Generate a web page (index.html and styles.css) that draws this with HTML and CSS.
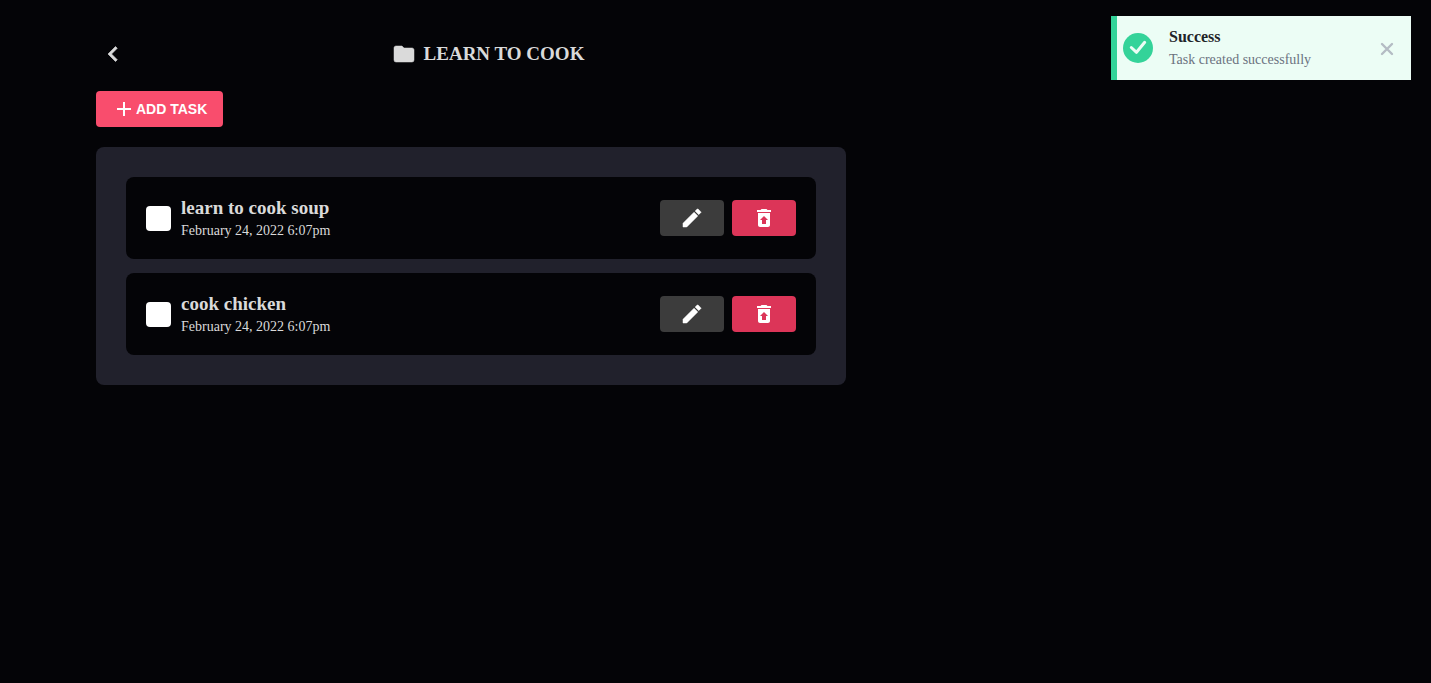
FILE: index.html
```html
<!DOCTYPE html>
<html lang="en">
<head>
  <meta charset="utf-8">
  <meta name="viewport" content="width=device-width, initial-scale=1">
  <title>Learn to cook</title>
  <link rel="stylesheet" href="styles.css">
</head>
<body>
  <svg class="sprite" aria-hidden="true">
    <symbol id="pencil" viewBox="0 0 24 24"><path d="M20.71,7.04C21.1,6.65 21.1,6 20.71,5.63L18.37,3.29C18,2.9 17.35,2.9 16.96,3.29L15.12,5.12L18.87,8.87M3,17.25V21H6.75L17.81,9.93L14.06,6.18L3,17.25Z"/></symbol>
    <symbol id="delete" viewBox="0 0 24 24"><path d="M14,14H16L12,10L8,14H10V18H14V14M6,7H18V19C18,20.1 17.1,21 16,21H8C6.9,21 6,20.1 6,19V7M19,4V6H5V4H8.5L9.5,3H14.5L15.5,4H19Z"/></symbol>
  </svg>

  <main class="page">
    <header class="header">
      <button class="back" type="button" aria-label="Back">
        <svg class="icon icon-large icon-bold" viewBox="0 0 24 24"><path d="M15.41,16.58L10.83,12L15.41,7.41L14,6L8,12L14,18L15.41,16.58Z"/></svg>
      </button>
      <h1 class="title">
        <svg class="icon icon-bold" viewBox="0 0 24 24" aria-hidden="true"><path d="M10,4H4C2.89,4 2,4.89 2,6V18A2,2 0 0,0 4,20H20A2,2 0 0,0 22,18V8C22,6.89 21.1,6 20,6H12L10,4Z"/></svg>
        LEARN TO COOK
      </h1>
    </header>

    <button class="button add" type="button">
      <svg class="icon" viewBox="0 0 24 24" aria-hidden="true"><path d="M19,13H13V19H11V13H5V11H11V5H13V11H19V13Z"/></svg>
      ADD TASK
    </button>

    <ul class="tasks">
      <li class="task">
        <input class="check" type="checkbox" id="task-1">
        <label class="details" for="task-1">
          <span class="name">learn to cook soup</span>
          <span class="date">February 24, 2022 6:07pm</span>
        </label>
        <button class="button action edit" type="button" aria-label="Edit"><svg class="icon icon-bold"><use href="#pencil"/></svg></button>
        <button class="button action remove" type="button" aria-label="Delete"><svg class="icon"><use href="#delete"/></svg></button>
      </li>
      <li class="task">
        <input class="check" type="checkbox" id="task-2">
        <label class="details" for="task-2">
          <span class="name">cook chicken</span>
          <span class="date">February 24, 2022 6:07pm</span>
        </label>
        <button class="button action edit" type="button" aria-label="Edit"><svg class="icon icon-bold"><use href="#pencil"/></svg></button>
        <button class="button action remove" type="button" aria-label="Delete"><svg class="icon"><use href="#delete"/></svg></button>
      </li>
    </ul>
  </main>

  <aside class="toast" role="status">
    <svg class="toast-icon" viewBox="0 0 30 30" aria-hidden="true"><circle cx="15" cy="15" r="15"/><path d="M8.3 14.5L13.5 19.3L21.7 9.3"/></svg>
    <div class="toast-text">
      <strong class="toast-title">Success</strong>
      <span class="toast-message">Task created successfully</span>
    </div>
    <button class="toast-close" type="button" aria-label="Close">
      <svg class="cross" viewBox="0 0 16 16"><path d="M3 4L13 14M13 4L3 14"/></svg>
    </button>
  </aside>
</body>
</html>
```
FILE: styles.css
```css
* {
  box-sizing: border-box;
}

body {
  margin: 0;
  min-height: 100vh;
  background: #040407;
  color: #dadada;
  font-family: "Liberation Serif", "Times New Roman", serif;
}

button {
  border: 0;
  padding: 0;
  background: none;
  color: inherit;
  cursor: pointer;
}

.sprite {
  position: absolute;
  width: 0;
  height: 0;
}

.icon {
  display: block;
  flex: none;
  width: 24px;
  height: 24px;
  fill: currentColor;
}

.icon-large {
  width: 30px;
  height: 30px;
}

.icon-bold {
  stroke: currentColor;
  stroke-width: 0.5;
  stroke-linejoin: round;
}

.page {
  max-width: 846px;
  padding: 36px 0 36px 96px;
}

.header {
  display: flex;
  align-items: center;
  margin-bottom: 19px;
}

.back {
  display: flex;
  align-items: center;
  justify-content: center;
  width: 34px;
  height: 36px;
}

.title {
  display: flex;
  flex: 1;
  align-items: center;
  justify-content: center;
  gap: 8px;
  margin: 0;
  font-size: 19px;
  line-height: 24px;
}

.button {
  display: flex;
  align-items: center;
  justify-content: center;
  height: 36px;
  border-radius: 4px;
  color: #fff;
  font: bold 14px "Liberation Sans", Arial, sans-serif;
}

.add {
  padding: 0 16px;
  background: #f94d6d;
}

.tasks {
  display: grid;
  gap: 14px;
  margin: 20px 0 0;
  padding: 30px;
  border-radius: 8px;
  background: #21212c;
  list-style: none;
}

.task {
  display: flex;
  align-items: center;
  gap: 8px;
  padding: 18px 20px;
  border-radius: 8px;
  background: #040407;
}

.check {
  flex: none;
  appearance: none;
  width: 25px;
  height: 25px;
  margin: 0 2px 0 0;
  border-radius: 4px;
  background: #fff;
}

.check:checked {
  background: #f94d6d;
}

.details {
  display: flex;
  flex: 1;
  flex-direction: column;
}

.name {
  font-size: 19px;
  font-weight: bold;
  line-height: 26px;
}

.date {
  font-size: 14px;
  line-height: 20px;
}

.action {
  width: 64px;
}

.edit {
  background: #3c3c3c;
}

.remove {
  background: #dc3558;
}

.toast {
  position: fixed;
  top: 16px;
  right: 20px;
  display: flex;
  align-items: center;
  width: 300px;
  padding: 9px 16px 9px 6px;
  border-left: 6px solid #34d399;
  background: #ecfdf5;
}

.toast-icon {
  flex: none;
  width: 30px;
  height: 30px;
  fill: #34d399;
}

.toast-icon path {
  fill: none;
  stroke: #ecfdf5;
  stroke-width: 3;
  stroke-linecap: round;
  stroke-linejoin: round;
}

.toast-text {
  display: flex;
  flex: 1;
  flex-direction: column;
  margin-left: 16px;
}

.toast-title {
  color: #1f2428;
  font-size: 16px;
  line-height: 24px;
}

.toast-message {
  color: #6b7280;
  font-size: 14px;
  line-height: 22px;
}

.toast-close {
  display: flex;
}

.cross {
  width: 16px;
  height: 16px;
  fill: none;
  stroke: #b4bcc4;
  stroke-width: 2.4;
  stroke-linecap: round;
}
```
